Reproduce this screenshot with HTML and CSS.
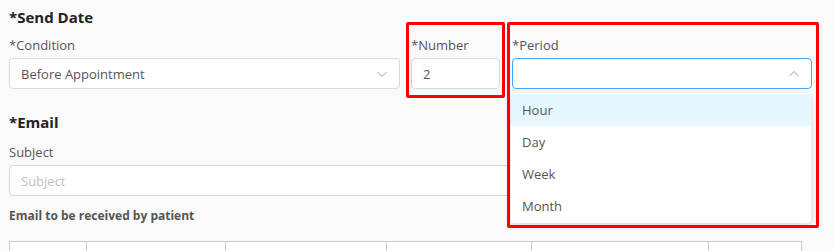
FILE: index.html
```html
<!DOCTYPE html>
<html lang="en">
<head>
    <meta charset="UTF-8">
    <meta name="viewport" content="width=device-width, initial-scale=1.0">
    <title>Reminder Settings</title>
    <link rel="stylesheet" href="styles.css">
</head>
<body>

<div class="page">
    <h3 class="section-title">*Send Date</h3>

    <div class="date-row">
        <div class="field">
            <label>*Condition</label>
            <div class="select">
                <span>Before Appointment</span>
                <svg class="arrow" width="12" height="12" viewBox="0 0 12 12"><path d="M1.5 4 L6 8.5 L10.5 4" fill="none" stroke="#c4c4c4" stroke-width="1.1"/></svg>
            </div>
        </div>

        <div class="field">
            <label>*Number</label>
            <div class="input">2</div>
        </div>

        <div class="field">
            <label>*Period</label>
            <div class="select focused">
                <span></span>
                <svg class="arrow" width="12" height="12" viewBox="0 0 12 12"><path d="M1.5 8 L6 3.5 L10.5 8" fill="none" stroke="#c4c4c4" stroke-width="1.1"/></svg>
            </div>
        </div>
    </div>

    <h3 class="section-title email-title">*Email</h3>

    <div class="field">
        <label>Subject</label>
        <div class="input wide placeholder">Subject</div>
    </div>

    <p class="sub-title">Email to be received by patient</p>

    <div class="toolbar">
        <div class="cell c1"></div>
        <div class="cell c2"></div>
        <div class="cell c3"></div>
        <div class="cell c4"></div>
        <div class="cell c5"></div>
        <div class="cell c6"></div>
    </div>

    <ul class="dropdown">
        <li class="active">Hour</li>
        <li>Day</li>
        <li>Week</li>
        <li>Month</li>
    </ul>

    <div class="mark mark-number"></div>
    <div class="mark mark-period"></div>
</div>

</body>
</html>
```

FILE: styles.css
```css
body {
    margin: 0;
    background-color: #fafafa;
    font-family: 'Open Sans', 'Noto Sans', sans-serif;
    color: #555;
    overflow: hidden;
}

.page {
    position: relative;
    padding: 6px 9px 0 9px;
    height: 251px;
    box-sizing: border-box;
}

.section-title {
    margin: 0;
    font-size: 15px;
    line-height: 22px;
    font-weight: 700;
    color: #222;
}

.email-title {
    margin-top: 22px;
    margin-bottom: 10px;
}

.date-row {
    display: flex;
    gap: 11px;
    margin-top: 8px;
}

.date-row .field:nth-child(1) {
    width: 391px;
}

.date-row .field:nth-child(2) {
    width: 89px;
}

.date-row .field:nth-child(3) {
    width: 300px;
    margin-left: 1px;
}

.field label {
    display: block;
    font-size: 13px;
    line-height: 18px;
    margin-bottom: 4px;
    color: #555;
}

.select,
.input {
    height: 31px;
    box-sizing: border-box;
    background-color: #fff;
    border: 1px solid #d9d9d9;
    border-radius: 4px;
    padding: 0 11px;
    display: flex;
    align-items: center;
    justify-content: space-between;
    font-size: 13px;
    color: #555;
}

.select.focused {
    border-color: #40a9ff;
}

.input.wide {
    width: 792px;
}

.placeholder {
    color: #bfbfbf;
}

.sub-title {
    margin: 12px 0 0 0;
    font-size: 12px;
    line-height: 16px;
    font-weight: 700;
    color: #555;
}

.toolbar {
    display: flex;
    margin-top: 17px;
    width: 791px;
    height: 20px;
    border: 1px solid #ccc;
    border-bottom: none;
    background-color: #fff;
}

.cell {
    border-right: 1px solid #ccc;
}

.c1 { width: 76px; }
.c2 { width: 138px; }
.c3 { width: 160px; }
.c4 { width: 144px; }
.c5 { width: 176px; }
.c6 { flex: 1; border-right: none; }

.dropdown {
    position: absolute;
    left: 511px;
    top: 93px;
    width: 300px;
    margin: 0;
    padding: 1px 0;
    list-style: none;
    background-color: #fff;
    border-radius: 4px;
    box-shadow: 0 2px 8px rgba(0, 0, 0, 0.15);
    box-sizing: border-box;
}

.dropdown li {
    height: 32px;
    line-height: 32px;
    padding: 0 11px;
    font-size: 13px;
    color: #555;
}

.dropdown li.active {
    background-color: #e6f7ff;
}

.mark {
    position: absolute;
    border: 3px solid #ff0000;
    border-radius: 2px;
    box-sizing: border-box;
}

.mark-number {
    left: 406px;
    top: 22px;
    width: 99px;
    height: 76px;
}

.mark-period {
    left: 507px;
    top: 22px;
    width: 312px;
    height: 206px;
}
```
